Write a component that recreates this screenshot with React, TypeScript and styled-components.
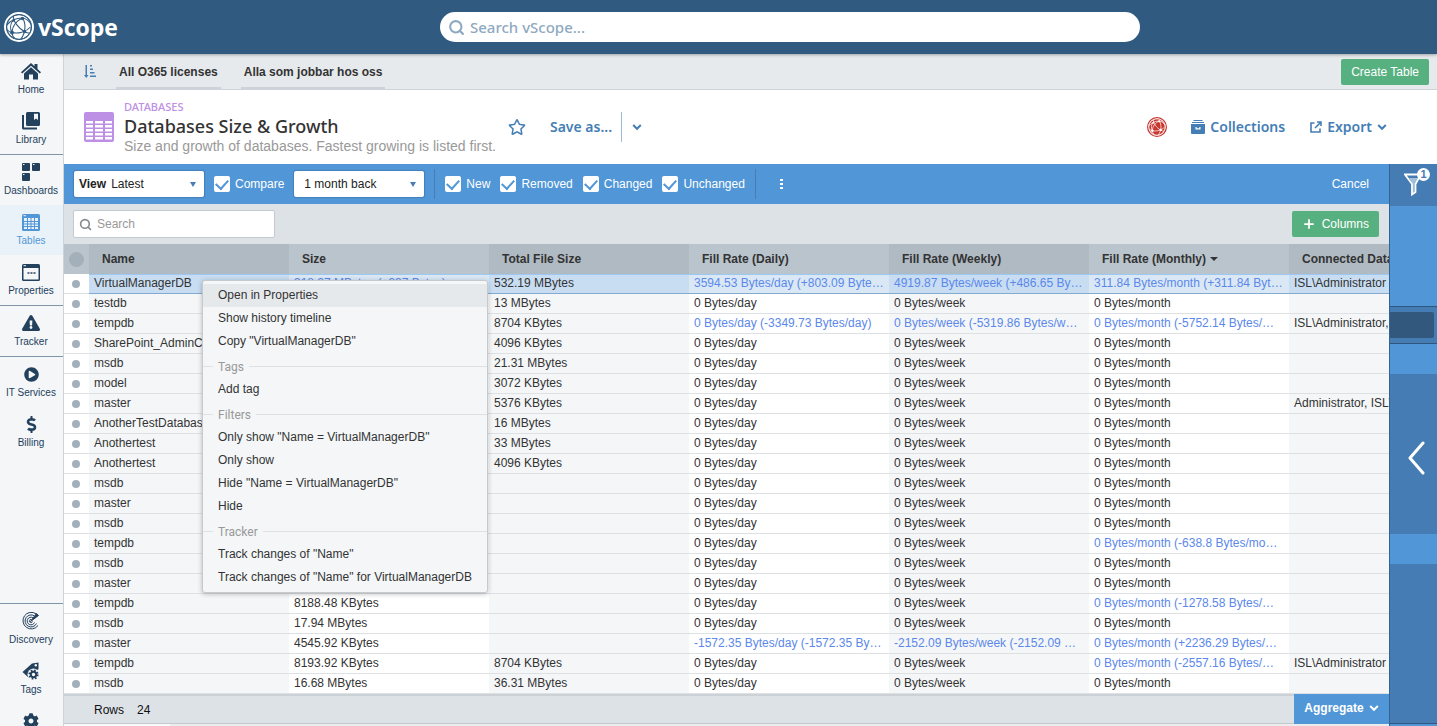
import React from "react";
import styled, { createGlobalStyle, css } from "styled-components";
import {
  FaExclamationTriangle,
  FaPlayCircle,
  FaDollarSign,
  FaCog,
  FaRegStar,
} from "react-icons/fa";
import { FiSearch, FiPlus } from "react-icons/fi";

const sans = `"Liberation Sans", Arial, Helvetica, sans-serif`;
const display = `"Noto Sans", "Open Sans", sans-serif`;

const GlobalStyle = createGlobalStyle`
  * { box-sizing: border-box; }
  body { margin: 0; font: 12px/20px ${sans}; color: #333; background: #fff; }
  button, input, select { font: inherit; color: inherit; }
  button { cursor: pointer; padding: 0; border: 0; background: none; }
  a { color: inherit; text-decoration: none; }
`;

const Page = styled.div`
  display: flex;
  flex-direction: column;
  height: 100vh;
  overflow: hidden;
`;

const Header = styled.header`
  position: relative;
  z-index: 2;
  flex: none;
  display: grid;
  grid-template-columns: minmax(130px, 440px) minmax(200px, 700px) minmax(8px, 1fr);
  align-items: center;
  height: 54px;
  background: #305a80;
  box-shadow: 0 1px 3px rgba(0, 0, 0, 0.3);
`;

const Brand = styled.a`
  display: flex;
  align-items: center;
  gap: 4px;
  padding-left: 4px;
  color: #fff;
`;

const BrandName = styled.span`
  font: bold 23px/30px "Open Sans", sans-serif;
`;

const GlobalSearch = styled.label`
  display: flex;
  align-items: center;
  gap: 5px;
  height: 30px;
  padding: 0 8px;
  border-radius: 15px;
  background: #fff;
  color: #8fa9c0;
`;

const PlainInput = styled.input<{ $large?: boolean; $tone: string }>`
  flex: 1;
  min-width: 0;
  padding: 0;
  border: 0;
  outline: 0;
  background: transparent;
  ${(p) => p.$large && css`font: 500 15px/20px ${display};`}
  &::placeholder { color: ${(p) => p.$tone}; opacity: 1; }
`;

const Body = styled.div`
  flex: 1;
  min-height: 0;
  display: flex;
`;

const Sidebar = styled.nav`
  flex: none;
  width: 64px;
  display: flex;
  flex-direction: column;
  background: #f4f6f8;
  border-right: 1px solid #cdd3d8;
`;

const NavGroup = styled.div<{ $ruled?: boolean; $bottom?: boolean }>`
  border-top: ${(p) => (p.$ruled ? "1px solid #8195a9" : "0")};
  ${(p) => p.$bottom && css`
    margin-top: auto;
    max-height: 123px;
    overflow: hidden;
  `}
`;

const NavItem = styled.a<{ $active?: boolean }>`
  display: flex;
  flex-direction: column;
  align-items: center;
  height: 50px;
  padding: 7px 1px 0 0;
  font-size: 10px;
  line-height: 18px;
  color: ${(p) => (p.$active ? "#5196d6" : "#23405c")};
  background: ${(p) => (p.$active ? "#eaf2f9" : "transparent")};
`;

const NavIcon = styled.span`
  display: flex;
  align-items: center;
  justify-content: center;
  height: 20px;
`;

const Main = styled.main`
  flex: 1;
  min-width: 0;
  display: flex;
  flex-direction: column;
`;

const TabBar = styled.div`
  flex: none;
  display: flex;
  align-items: center;
  height: 36px;
  padding: 0 8px 0 20px;
  background: #e6eaed;
  border-bottom: 1px solid #cdd3d8;
`;

const TabTools = styled.button`
  display: flex;
  color: #457eb5;
  margin-right: 20px;
`;

const Tab = styled.a`
  align-self: flex-end;
  height: 28px;
  margin-right: 20px;
  padding: 0 3px;
  font-weight: bold;
  line-height: 22px;
  border-bottom: 2px solid #cdd3d8;
`;

const GreenButton = styled.button`
  display: flex;
  align-items: center;
  gap: 6px;
  height: 26px;
  margin-left: auto;
  padding: 0 10px;
  border-radius: 2px;
  background: #57b07f;
  color: #fff;
`;

const TitleBar = styled.section`
  flex: none;
  display: flex;
  align-items: center;
  height: 74px;
  padding: 0 50px 0 20px;
`;

const TitleText = styled.div`
  margin: 0 12px 0 10px;
  white-space: nowrap;
`;

const Category = styled.div`
  font: 500 11px/14px ${display};
  color: #bd90e5;
`;

const Title = styled.h1`
  margin: 0;
  font: 500 18px/24px ${display};
`;

const Subtitle = styled.p`
  margin: 0;
  font-size: 14px;
  line-height: 17px;
  color: #999;
`;

const TitleAction = styled.button<{ $gap?: number }>`
  display: flex;
  align-items: center;
  gap: 5px;
  margin-left: ${(p) => p.$gap ?? 0}px;
  font: 600 14px/20px ${display};
  color: #457eb5;
`;

const TitleDivider = styled.span`
  width: 1px;
  height: 30px;
  margin-left: 9px;
  background: #9fbad4;
`;

const Spacer = styled.span`
  flex: 1;
`;

const Workspace = styled.div`
  flex: 1;
  min-height: 0;
  display: flex;
`;

const Content = styled.div`
  flex: 1;
  min-width: 0;
  display: flex;
  flex-direction: column;
`;

const Toolbar = styled.div`
  flex: none;
  display: flex;
  align-items: center;
  gap: 10px;
  height: 40px;
  padding: 0 20px 0 10px;
  background: #5196d6;
  color: #fff;
`;

const SelectBox = styled.label`
  position: relative;
  display: flex;
  align-items: center;
  width: 130px;
  height: 26px;
  padding-left: 5px;
  border-radius: 2px;
  background: #fff;
  color: #222;
  box-shadow: 0 0 1px 1px rgba(40, 90, 140, 0.35);
`;

const Select = styled.select`
  flex: 1;
  min-width: 0;
  height: 26px;
  padding: 0 20px 0 5px;
  border: 0;
  outline: 0;
  background: transparent;
  appearance: none;
`;

const Caret = styled.span`
  position: absolute;
  right: 8px;
  top: 11px;
  border: solid transparent;
  border-width: 5px 3px 0;
  border-top-color: #457eb5;
  pointer-events: none;
`;

const CheckLabel = styled.label`
  display: flex;
  align-items: center;
  gap: 5px;
`;

const Check = styled.input`
  appearance: none;
  width: 16px;
  height: 16px;
  margin: 0;
  border-radius: 2px;
  background: #fff;
  display: grid;
  place-items: center;
  &:checked::after {
    content: "";
    width: 6px;
    height: 10px;
    margin-bottom: 3px;
    border: solid #5196d6;
    border-width: 0 2px 2px 0;
    transform: rotate(42deg);
  }
`;

const ToolDivider = styled.span`
  width: 1px;
  height: 30px;
  background: #457eb5;
`;

const MoreButton = styled.button`
  display: flex;
  flex-direction: column;
  gap: 2px;
  margin-left: 14px;
`;

const Dot = styled.i`
  width: 3px;
  height: 2px;
  background: #fff;
`;

const TextButton = styled.button`
  margin-left: auto;
`;

const SearchBar = styled.div`
  flex: none;
  display: flex;
  align-items: center;
  height: 40px;
  padding: 0 10px 0 9px;
  background: #dde2e6;
`;

const TableSearch = styled.label`
  display: flex;
  align-items: center;
  gap: 5px;
  width: 202px;
  height: 28px;
  padding: 0 5px;
  border: 1px solid #c3c9ce;
  border-radius: 2px;
  background: #fff;
  color: #85898d;
`;

const TableArea = styled.div`
  position: relative;
  flex: 1;
  min-height: 0;
`;

const TableClip = styled.div`
  height: 100%;
  overflow: hidden;
`;

const Table = styled.table`
  width: 1425px;
  table-layout: fixed;
  border-collapse: separate;
  border-spacing: 0;
`;

const SelectCol = styled.col`
  width: 25px;
`;

const HeadCell = styled.th`
  height: 30px;
  padding: 0 13px;
  text-align: left;
  white-space: nowrap;
  background: #bac4cc;
  &:nth-child(even) { background: #b0bac3; }
  &:first-child { padding: 0 5px; }
`;

const SortMark = styled.span`
  display: inline-block;
  margin-left: 4px;
  vertical-align: 2px;
  border: solid transparent;
  border-width: 4px 4px 0;
  border-top-color: #333;
`;

const Marker = styled.span<{ $head?: boolean }>`
  display: block;
  width: ${(p) => (p.$head ? 15 : 8)}px;
  height: ${(p) => (p.$head ? 15 : 8)}px;
  border-radius: 50%;
  background: ${(p) => (p.$head ? "#a3afb9" : "#a3b0bb")};
`;

const Cell = styled.td<{ $changed?: boolean }>`
  height: 20px;
  padding: 0 5px;
  line-height: 19px;
  overflow: hidden;
  white-space: nowrap;
  text-overflow: ellipsis;
  border-bottom: 1px solid #dde1e4;
  color: ${(p) => (p.$changed ? "#5b88ea" : "#333")};
  &:nth-child(even) { background: #f4f6f8; }
  &:first-child { padding: 0 8px; }
`;

const Row = styled.tr<{ $selected?: boolean }>`
  ${(p) => p.$selected && css`
    ${Cell}:not(:first-child) {
      background: #dae8f6;
      padding-bottom: 1px;
      line-height: 17px;
      border-top: 1px solid #9cc8f2;
      border-bottom-color: #84aad0;
    }
    ${Cell}:nth-child(even) { background: #c8ddf2; }
  `}
`;

const Menu = styled.div`
  position: absolute;
  z-index: 1;
  left: 138px;
  top: 36px;
  width: 286px;
  padding: 3px 0;
  border: 1px solid #c6cacd;
  border-radius: 3px;
  background: #f4f6f8;
  box-shadow: 0 1px 5px rgba(0, 0, 0, 0.25);
`;

const MenuItem = styled.button<{ $hover?: boolean }>`
  display: block;
  width: 100%;
  height: 23px;
  padding: 0 0 2px 15px;
  text-align: left;
  background: ${(p) => (p.$hover ? "#e6e9ec" : "transparent")};
`;

const MenuHeading = styled.div`
  display: flex;
  align-items: center;
  gap: 5px;
  height: 25px;
  padding-top: 2px;
  font: 12px/22px "Roboto", sans-serif;
  color: #999;
  &::before, &::after {
    content: "";
    height: 1px;
    background: #dde1e4;
  }
  &::before { width: 10px; }
  &::after { flex: 1; }
`;

const Footer = styled.footer`
  flex: none;
  display: flex;
  align-items: center;
  gap: 13px;
  height: 30px;
  padding-left: 30px;
  background: #dde2e6;
  border-top: 2px solid #ccd1d5;
  border-bottom: 1px solid #c3c9ce;
  color: #111;
`;

const Aggregate = styled.button`
  display: flex;
  align-items: center;
  justify-content: center;
  gap: 5px;
  width: 95px;
  height: 30px;
  margin: -2px 0 -1px auto;
  padding-bottom: 2px;
  background: #5196d6;
  color: #fff;
  font-weight: bold;
`;

const ScrollTrack = styled.div`
  flex: none;
  height: 2px;
  background: #ececec;
`;

const ScrollThumb = styled.div`
  width: 8%;
  height: 2px;
  background: #fafafa;
`;

const FilterPanel = styled.aside`
  flex: none;
  width: 48px;
  display: flex;
  flex-direction: column;
  background: #5196d6;
  border-left: 1px solid #336294;
`;

const FilterToggle = styled.button`
  position: relative;
  height: 42px;
  background: #457cb3;
`;

const FilterIcon = styled.svg`
  display: block;
  margin: 0 0 2px 14px;
`;

const Badge = styled.span`
  position: absolute;
  top: 4px;
  right: 7px;
  width: 13px;
  height: 13px;
  border-radius: 50%;
  background: #fff;
  color: #457cb3;
  font: bold 11px/13px ${sans};
`;

const FilterSlot = styled.div`
  height: 38px;
  margin-top: 100px;
  padding: 5px 3px 5px 0;
  border: solid #2f567e;
  border-width: 1px 0;
  background: #457cb3;
`;

const FilterField = styled.div`
  height: 26px;
  border-radius: 0 2px 2px 0;
  background: #32587e;
`;

const PanelStack = styled.div`
  flex: 1;
  display: flex;
  flex-direction: column;
  padding-bottom: 2px;
`;

const PanelBlock = styled.div<{ $last?: boolean }>`
  flex: 1 1 0;
  margin-top: 30px;
  background: #457cb3;
  border-bottom: ${(p) => (p.$last ? "1px solid #2f567e" : "0")};
`;

const ExpandButton = styled.button`
  width: 100%;
  height: 100%;
  display: flex;
  align-items: center;
  justify-content: center;
  padding: 8px 0 0 5px;
`;

function Globe({ size, fg, bg }: { size: number; fg: string; bg: string }) {
  return (
    <svg width={size} height={size} viewBox="0 0 30 30" aria-hidden="true">
      <circle cx="15" cy="15" r="14" fill="none" stroke={fg} strokeWidth="2" />
      <circle cx="15" cy="15" r="12" fill={fg} />
      <g fill="none" stroke={bg} strokeWidth="1.100">
        <circle cx="15" cy="15" r="12.300" strokeWidth="0.900" />
        <path d="M18.500 6C12 9 8.500 14 8 20C8 23 9 25 11 26.500" />
        <path d="M18.500 6C22 11 22 20 17 27" />
        <path d="M3 13C6 9 12 6 18.500 6C22 6.500 25 9 27 12" />
        <path d="M3.500 18C5 20 7 20.500 8 20.500C14 22 22 20 26.500 15" />
        <path d="M9.500 4C9 9 14 16 21 20C23 21 24 21 25 21" />
        <path d="M9 8.500C6 12 6 17 8 20.500" />
      </g>
      <g fill={bg}>
        <circle cx="18.500" cy="6.500" r="1.700" />
        <circle cx="8" cy="20.500" r="1.900" />
        <circle cx="20.500" cy="19.500" r="1.700" />
        <circle cx="9.500" cy="8.500" r="1.300" />
      </g>
    </svg>
  );
}

const Chevron = () => (
  <svg width="10" height="8" viewBox="0 0 10 8" aria-hidden="true">
    <path d="M1.200 2L5 5.800L8.800 2" fill="none" stroke="currentColor" strokeWidth="2" />
  </svg>
);

const SortIcon = () => (
  <svg width="12" height="13" viewBox="0 0 12 13" fill="currentColor" aria-hidden="true">
    <path d="M1.500 0H3V10H4.500L2.250 13L0 10H1.500Z" />
    <path d="M6 0H8V1.500H6ZM6 3.500H9V5H6ZM6 7H10.500V8.500H6ZM6 10.500H12V12H6Z" />
  </svg>
);

const HomeIcon = () => (
  <svg width="20" height="17" viewBox="0 0 20 17" fill="currentColor">
    <path d="M10 0L13.500 3.200V1H16.500V6L20 9.200L18.800 10.500L10 2.700L1.200 10.500L0 9.200Z" />
    <path d="M10 4.300L17 10.400V16.500H12V11.500H8V16.500H3V10.400Z" />
  </svg>
);

const LibraryIcon = () => (
  <svg width="18" height="18" viewBox="0 0 18 18" fill="currentColor">
    <path fillRule="evenodd" d="M6 0H16.500A1.500 1.500 0 0 1 18 1.500V12.500A1.500 1.500 0 0 1 16.500 14H5.500A1.500 1.500 0 0 1 4 12.500V1.500A1.500 1.500 0 0 1 5.500 0ZM12 1.800V8L14 6.400L16 8V1.800Z" />
    <path d="M0 3H2V15.500H15V17.500H1.500A1.500 1.500 0 0 1 0 16Z" />
  </svg>
);

const DashboardsIcon = () => (
  <svg width="18" height="18" viewBox="0 0 18 18">
    <g fill="currentColor">
      <rect x="0" y="0" width="8" height="8" rx="1" />
      <rect x="10" y="0" width="8" height="8" rx="1" />
      <rect x="0" y="10" width="8" height="8" rx="1" />
    </g>
    <g fill="#f4f6f8">
      <rect x="1" y="1" width="1.500" height="1" />
      <rect x="11" y="1" width="1.500" height="1" />
      <rect x="1" y="11" width="1.500" height="1" />
    </g>
  </svg>
);

const TablesIcon = () => (
  <svg width="18" height="17" viewBox="0 0 18 17">
    <rect width="18" height="17" rx="1.500" fill="currentColor" />
    <rect x="2" y="4" width="14" height="11" fill="#eaf2f9" />
    <path d="M2 7.500H16M2 10H16M2 12.500H16M5.500 4V15M9 4V15M12.500 4V15" stroke="currentColor" />
    <path d="M1.500 1.700H4" stroke="#eaf2f9" />
  </svg>
);

const PropertiesIcon = () => (
  <svg width="18" height="17" viewBox="0 0 18 17">
    <rect width="18" height="17" rx="1.500" fill="currentColor" />
    <rect x="1.500" y="4" width="15" height="11.500" fill="#f4f6f8" />
    <path d="M5.500 9H7.500M8.500 9H10.500M11.500 9H13.500" stroke="currentColor" strokeWidth="1.600" />
    <path d="M1.500 1.700H4" stroke="#f4f6f8" />
  </svg>
);

const DiscoveryIcon = () => (
  <svg width="18" height="18" viewBox="0 0 18 18" fill="none" stroke="currentColor">
    <path d="M14 1.800A8.300 8.300 0 1 0 16 13.500" />
    <path d="M12.500 4A6 6 0 1 0 14.500 11.500" />
    <path d="M11 5.800A3.800 3.800 0 1 0 12.500 10.500" />
    <path d="M9.500 7.500A1.600 1.600 0 1 0 10.500 9.500" />
    <path d="M8.500 9.500L16.500 3.500L14.500 1.500Z" fill="currentColor" />
  </svg>
);

const TagsIcon = () => (
  <svg width="18" height="18" viewBox="0 0 18 18">
    <path d="M10 1.500L16.500 0.500V7L7 16L0.500 10Z" fill="currentColor" />
    <circle cx="13.800" cy="3.300" r="1.200" fill="#f4f6f8" />
    <circle cx="11.500" cy="12.500" r="6" fill="#f4f6f8" />
    <circle cx="11.500" cy="12.500" r="2.700" fill="none" stroke="currentColor" strokeWidth="2" />
    <circle cx="11.500" cy="12.500" r="4.200" fill="none" stroke="currentColor" strokeWidth="1.800" strokeDasharray="1.650 1.650" />
  </svg>
);

const gridRows = [9, 13, 17, 21, 25];
const gridCols = [[2, 7], [11, 8], [21, 7]];

const GridIcon = () => (
  <svg width="30" height="30" viewBox="0 0 30 30" aria-hidden="true">
    <rect width="30" height="30" rx="2" fill="#bd90e5" />
    <g fill="#fff">
      {gridRows.map((y) =>
        gridCols.map(([x, w]) => (
          <rect key={`${x}-${y}`} x={x} y={y} width={w} height="2.500" />
        ))
      )}
    </g>
  </svg>
);

const CollectionsIcon = () => (
  <svg width="14" height="14" viewBox="0 0 14 14" fill="currentColor">
    <path d="M2.500 0H11.500V1H2.500ZM1 2H13V3H1Z" />
    <path fillRule="evenodd" d="M0 4H14V13A1 1 0 0 1 13 14H1A1 1 0 0 1 0 13ZM4.500 7V9.500H9.500V7H8.300V8.300H5.700V7Z" />
  </svg>
);

const ExportIcon = () => (
  <svg width="12" height="12" viewBox="0 0 12 12" fill="none" stroke="currentColor" strokeWidth="1.600">
    <path d="M4.500 2H1V11H10V7.500" />
    <path d="M7 1H11V5M10.800 1.200L5 7" />
  </svg>
);

const navGroups = [
  [
    { label: "Home", icon: <HomeIcon /> },
    { label: "Library", icon: <LibraryIcon /> },
  ],
  [
    { label: "Dashboards", icon: <DashboardsIcon /> },
    { label: "Tables", icon: <TablesIcon />, active: true },
    { label: "Properties", icon: <PropertiesIcon /> },
  ],
  [{ label: "Tracker", icon: <FaExclamationTriangle size={18} /> }],
  [
    { label: "IT Services", icon: <FaPlayCircle size={15} /> },
    { label: "Billing", icon: <FaDollarSign size={17} /> },
  ],
];

const bottomNav = [
  { label: "Discovery", icon: <DiscoveryIcon /> },
  { label: "Tags", icon: <TagsIcon /> },
  { label: "Settings", icon: <FaCog size={16} /> },
];

const D = "0 Bytes/day";
const W = "0 Bytes/week";
const M = "0 Bytes/month";

const rows: string[][] = [
  ["VirtualManagerDB", "318.27 MBytes (+337 Bytes)", "532.19 MBytes", "3594.53 Bytes/day (+803.09 Bytes/day)", "4919.87 Bytes/week (+486.65 Bytes/week)", "311.84 Bytes/month (+311.84 Bytes/month)", "ISL\\Administrator"],
  ["testdb", "", "13 MBytes", D, W, M, ""],
  ["tempdb", "", "8704 KBytes", "0 Bytes/day (-3349.73 Bytes/day)", "0 Bytes/week (-5319.86 Bytes/week)", "0 Bytes/month (-5752.14 Bytes/month)", "ISL\\Administrator, sa"],
  ["SharePoint_AdminContent", "", "4096 KBytes", D, W, M, ""],
  ["msdb", "", "21.31 MBytes", D, W, M, ""],
  ["model", "", "3072 KBytes", D, W, M, ""],
  ["master", "", "5376 KBytes", D, W, M, "Administrator, ISL\\Administrator"],
  ["AnotherTestDatabase", "", "16 MBytes", D, W, M, ""],
  ["Anothertest", "", "33 MBytes", D, W, M, ""],
  ["Anothertest", "", "4096 KBytes", D, W, M, ""],
  ["msdb", "", "", D, W, M, ""],
  ["master", "", "", D, W, M, ""],
  ["msdb", "", "", D, W, M, ""],
  ["tempdb", "", "", D, W, "0 Bytes/month (-638.8 Bytes/month)", ""],
  ["msdb", "", "", D, W, M, ""],
  ["master", "", "", D, W, M, ""],
  ["tempdb", "8188.48 KBytes", "", D, W, "0 Bytes/month (-1278.58 Bytes/month)", ""],
  ["msdb", "17.94 MBytes", "", D, W, M, ""],
  ["master", "4545.92 KBytes", "", "-1572.35 Bytes/day (-1572.35 Bytes/day)", "-2152.09 Bytes/week (-2152.09 Bytes/week)", "0 Bytes/month (+2236.29 Bytes/month)", ""],
  ["tempdb", "8193.92 KBytes", "8704 KBytes", D, W, "0 Bytes/month (-2557.16 Bytes/month)", "ISL\\Administrator"],
  ["msdb", "16.68 MBytes", "36.31 MBytes", D, W, M, ""],
];

const columns = ["Name", "Size", "Total File Size", "Fill Rate (Daily)", "Fill Rate (Weekly)", "Fill Rate (Monthly)", "Connected Database Users"];

const menu = [
  { items: ["Open in Properties", "Show history timeline", 'Copy "VirtualManagerDB"'] },
  { heading: "Tags", items: ["Add tag"] },
  { heading: "Filters", items: ['Only show "Name = VirtualManagerDB"', "Only show", 'Hide "Name = VirtualManagerDB"', "Hide"] },
  { heading: "Tracker", items: ['Track changes of "Name"', 'Track changes of "Name" for VirtualManagerDB'] },
];

export default function App() {
  return (
    <Page>
      <GlobalStyle />
      <Header>
        <Brand href="#">
          <Globe size={30} fg="#fff" bg="#305a80" />
          <BrandName>vScope</BrandName>
        </Brand>
        <GlobalSearch>
          <FiSearch size={17} strokeWidth={3} />
          <PlainInput $large $tone="#8fa9c0" placeholder="Search vScope..." aria-label="Search vScope" />
        </GlobalSearch>
      </Header>
      <Body>
        <Sidebar>
          {navGroups.map((group, i) => (
            <NavGroup key={i} $ruled={i > 0}>
              {group.map((item) => (
                <NavItem key={item.label} href="#" $active={"active" in item}>
                  <NavIcon>{item.icon}</NavIcon>
                  {item.label}
                </NavItem>
              ))}
            </NavGroup>
          ))}
          <NavGroup $ruled $bottom>
            {bottomNav.map((item) => (
              <NavItem key={item.label} href="#">
                <NavIcon>{item.icon}</NavIcon>
                {item.label}
              </NavItem>
            ))}
          </NavGroup>
        </Sidebar>
        <Main>
          <TabBar>
            <TabTools aria-label="Sort tabs"><SortIcon /></TabTools>
            <Tab href="#">All O365 licenses</Tab>
            <Tab href="#">Alla som jobbar hos oss</Tab>
            <GreenButton>Create Table</GreenButton>
          </TabBar>
          <TitleBar>
            <GridIcon />
            <TitleText>
              <Category>DATABASES</Category>
              <Title>Databases Size &amp; Growth</Title>
              <Subtitle>Size and growth of databases. Fastest growing is listed first.</Subtitle>
            </TitleText>
            <TitleAction aria-label="Favourite"><FaRegStar size={18} /></TitleAction>
            <TitleAction $gap={24}>Save as...</TitleAction>
            <TitleDivider />
            <TitleAction $gap={10} aria-label="More save options"><Chevron /></TitleAction>
            <Spacer />
            <Globe size={20} fg="#c9352f" bg="#fff" />
            <TitleAction $gap={24}><CollectionsIcon />Collections</TitleAction>
            <TitleAction $gap={25}><ExportIcon />Export<Chevron /></TitleAction>
          </TitleBar>
          <Workspace>
            <Content>
              <Toolbar>
                <SelectBox>
                  <b>View</b>
                  <Select><option>Latest</option></Select>
                  <Caret />
                </SelectBox>
                <CheckLabel><Check type="checkbox" defaultChecked />Compare</CheckLabel>
                <SelectBox>
                  <Select aria-label="Compare with"><option>1 month back</option></Select>
                  <Caret />
                </SelectBox>
                <ToolDivider />
                {["New", "Removed", "Changed", "Unchanged"].map((name) => (
                  <CheckLabel key={name}><Check type="checkbox" defaultChecked />{name}</CheckLabel>
                ))}
                <ToolDivider />
                <MoreButton aria-label="More"><Dot /><Dot /><Dot /></MoreButton>
                <TextButton>Cancel</TextButton>
              </Toolbar>
              <SearchBar>
                <TableSearch>
                  <FiSearch size={13} strokeWidth={3} />
                  <PlainInput $tone="#999" placeholder="Search" aria-label="Search table" />
                </TableSearch>
                <GreenButton><FiPlus size={14} strokeWidth={3} />Columns</GreenButton>
              </SearchBar>
              <TableArea>
                <TableClip>
                  <Table>
                    <colgroup>
                      <SelectCol />
                      {columns.map((c) => <col key={c} />)}
                    </colgroup>
                    <thead>
                      <tr>
                        <HeadCell><Marker $head /></HeadCell>
                        {columns.map((c) => (
                          <HeadCell key={c}>{c}{c.includes("Monthly") && <SortMark />}</HeadCell>
                        ))}
                      </tr>
                    </thead>
                    <tbody>
                      {rows.map((row, r) => (
                        <Row key={r} $selected={r === 0}>
                          <Cell><Marker /></Cell>
                          {row.map((value, c) => (
                            <Cell key={c} $changed={value.includes("Bytes") && value.includes("(")}>{value}</Cell>
                          ))}
                        </Row>
                      ))}
                    </tbody>
                  </Table>
                </TableClip>
                <Menu role="menu">
                  {menu.map((section, s) => (
                    <React.Fragment key={s}>
                      {section.heading && <MenuHeading>{section.heading}</MenuHeading>}
                      {section.items.map((label, i) => (
                        <MenuItem key={label} role="menuitem" $hover={s === 0 && i === 0}>{label}</MenuItem>
                      ))}
                    </React.Fragment>
                  ))}
                </Menu>
              </TableArea>
              <Footer>
                <span>Rows</span>
                <span>24</span>
                <Aggregate>Aggregate <Chevron /></Aggregate>
              </Footer>
              <ScrollTrack><ScrollThumb /></ScrollTrack>
            </Content>
            <FilterPanel>
              <FilterToggle aria-label="Filters, 1 active">
                <FilterIcon width="20" height="24" viewBox="0 0 20 24" fill="none" stroke="#fff">
                  <path d="M1 2.500H17L11.500 12V20L8 22.500V12Z" strokeWidth="1.800" />
                  <path d="M5 6H14L10.500 12V20H9V12Z" fill="#fff" fillOpacity="0.500" stroke="none" />
                </FilterIcon>
                <Badge>1</Badge>
              </FilterToggle>
              <FilterSlot><FilterField /></FilterSlot>
              <PanelStack>
                <PanelBlock>
                  <ExpandButton aria-label="Expand filters">
                    <svg width="17" height="34" viewBox="0 0 17 34" fill="none" stroke="#fff" strokeWidth="3" strokeLinecap="round" strokeLinejoin="round">
                      <path d="M15 2L2 17L15 32" />
                    </svg>
                  </ExpandButton>
                </PanelBlock>
                <PanelBlock $last />
              </PanelStack>
            </FilterPanel>
          </Workspace>
        </Main>
      </Body>
    </Page>
  );
}
